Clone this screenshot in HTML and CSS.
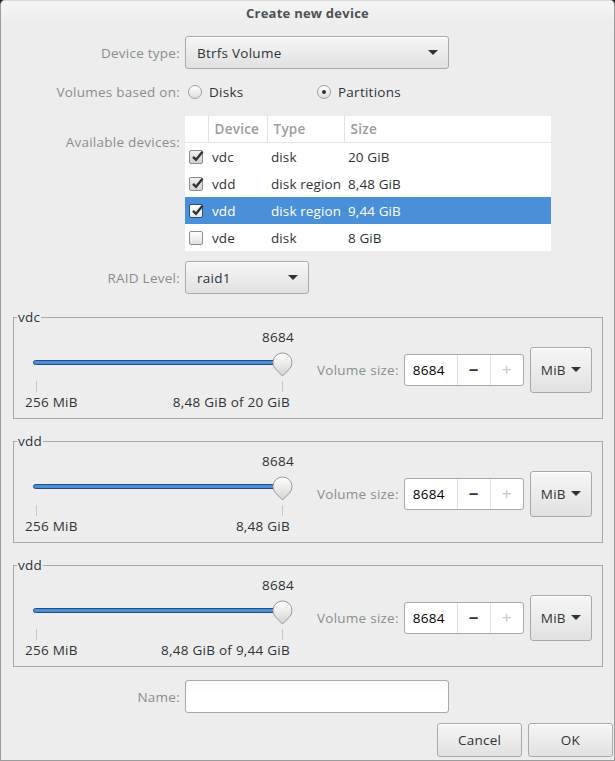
FILE: index.html
```html
<!DOCTYPE html>
<html lang="en">
<head>
<meta charset="utf-8">
<title>Create new device</title>
<link rel="stylesheet" href="styles.css">
</head>
<body>
<div class="window">
  <header class="titlebar">Create new device</header>
  <main class="content">
    <div class="row row-type">
      <span class="lbl">Device type:</span>
      <div class="combo combo-wide"><span>Btrfs Volume</span><span class="arrow"></span></div>
    </div>

    <div class="row row-radios">
      <span class="lbl">Volumes based on:</span>
      <div class="radios">
        <span class="radio-opt radio-first"><span class="radio"></span>Disks</span>
        <span class="radio-opt"><span class="radio radio-on"></span>Partitions</span>
      </div>
    </div>

    <div class="row row-table">
      <span class="lbl lbl-top">Available devices:</span>
      <table class="devices">
        <colgroup><col class="c-chk"><col class="c-dev"><col class="c-type"><col class="c-size"></colgroup>
        <thead>
          <tr><th></th><th>Device</th><th>Type</th><th>Size</th></tr>
        </thead>
        <tbody>
          <tr><td><span class="check on"><svg viewBox="0 0 14 14" width="14" height="14"><path d="M3 6.8 L6 9.8 L12.5 1.8" fill="none" stroke="#2e3436" stroke-width="2.4"/></svg></span></td><td>vdc</td><td>disk</td><td>20 GiB</td></tr>
          <tr><td><span class="check on"><svg viewBox="0 0 14 14" width="14" height="14"><path d="M3 6.8 L6 9.8 L12.5 1.8" fill="none" stroke="#2e3436" stroke-width="2.4"/></svg></span></td><td>vdd</td><td>disk region</td><td>8,48 GiB</td></tr>
          <tr class="sel"><td><span class="check on sel-check"><svg viewBox="0 0 14 14" width="14" height="14"><path d="M3 6.8 L6 9.8 L12.5 1.8" fill="none" stroke="#2e3436" stroke-width="2.4"/></svg></span></td><td>vdd</td><td>disk region</td><td>9,44 GiB</td></tr>
          <tr><td><span class="check"></span></td><td>vde</td><td>disk</td><td>8 GiB</td></tr>
        </tbody>
      </table>
    </div>

    <div class="row row-raid">
      <span class="lbl">RAID Level:</span>
      <div class="combo combo-raid"><span>raid1</span><span class="arrow"></span></div>
    </div>

    <fieldset class="frame frame-first">
      <legend>vdc</legend>
      <div class="frame-body">
        <div class="slider">
          <div class="slider-value">8684</div>
          <svg class="slider-track" width="270" height="46" viewBox="0 0 270 46">
            <defs>
              <linearGradient id="hg1" x1="0" y1="0" x2="0" y2="1"><stop offset="0" stop-color="#ffffff"/><stop offset="1" stop-color="#d4d4d4"/></linearGradient>
            </defs>
            <line x1="11.5" y1="34" x2="11.5" y2="45" stroke="#c8c8c8"/>
            <line x1="257.5" y1="34" x2="257.5" y2="45" stroke="#c8c8c8"/>
            <rect x="8.5" y="13.5" width="246" height="4" rx="2" fill="#4a90d9" stroke="#244e80"/>
            <path d="M257.5 29 L250.6 22 A9.5 9.5 0 1 1 264.4 22 Z" fill="url(#hg1)" stroke="#9a9a9a"/>
          </svg>
          <div class="slider-labels"><span>256 MiB</span><span>8,48 GiB of 20 GiB</span></div>
        </div>
        <span class="vol-label">Volume size:</span>
        <div class="spin"><span class="spin-entry">8684</span><span class="spin-btn">−</span><span class="spin-btn spin-off">+</span></div>
        <div class="unit-btn"><span>MiB</span><span class="arrow"></span></div>
      </div>
    </fieldset>

    <fieldset class="frame">
      <legend>vdd</legend>
      <div class="frame-body">
        <div class="slider">
          <div class="slider-value">8684</div>
          <svg class="slider-track" width="270" height="46" viewBox="0 0 270 46">
            <defs>
              <linearGradient id="hg2" x1="0" y1="0" x2="0" y2="1"><stop offset="0" stop-color="#ffffff"/><stop offset="1" stop-color="#d4d4d4"/></linearGradient>
            </defs>
            <line x1="11.5" y1="34" x2="11.5" y2="45" stroke="#c8c8c8"/>
            <line x1="257.5" y1="34" x2="257.5" y2="45" stroke="#c8c8c8"/>
            <rect x="8.5" y="13.5" width="246" height="4" rx="2" fill="#4a90d9" stroke="#244e80"/>
            <path d="M257.5 29 L250.6 22 A9.5 9.5 0 1 1 264.4 22 Z" fill="url(#hg2)" stroke="#9a9a9a"/>
          </svg>
          <div class="slider-labels"><span>256 MiB</span><span>8,48 GiB</span></div>
        </div>
        <span class="vol-label">Volume size:</span>
        <div class="spin"><span class="spin-entry">8684</span><span class="spin-btn">−</span><span class="spin-btn spin-off">+</span></div>
        <div class="unit-btn"><span>MiB</span><span class="arrow"></span></div>
      </div>
    </fieldset>

    <fieldset class="frame">
      <legend>vdd</legend>
      <div class="frame-body">
        <div class="slider">
          <div class="slider-value">8684</div>
          <svg class="slider-track" width="270" height="46" viewBox="0 0 270 46">
            <defs>
              <linearGradient id="hg3" x1="0" y1="0" x2="0" y2="1"><stop offset="0" stop-color="#ffffff"/><stop offset="1" stop-color="#d4d4d4"/></linearGradient>
            </defs>
            <line x1="11.5" y1="34" x2="11.5" y2="45" stroke="#c8c8c8"/>
            <line x1="257.5" y1="34" x2="257.5" y2="45" stroke="#c8c8c8"/>
            <rect x="8.5" y="13.5" width="246" height="4" rx="2" fill="#4a90d9" stroke="#244e80"/>
            <path d="M257.5 29 L250.6 22 A9.5 9.5 0 1 1 264.4 22 Z" fill="url(#hg3)" stroke="#9a9a9a"/>
          </svg>
          <div class="slider-labels"><span>256 MiB</span><span>8,48 GiB of 9,44 GiB</span></div>
        </div>
        <span class="vol-label">Volume size:</span>
        <div class="spin"><span class="spin-entry">8684</span><span class="spin-btn">−</span><span class="spin-btn spin-off">+</span></div>
        <div class="unit-btn"><span>MiB</span><span class="arrow"></span></div>
      </div>
    </fieldset>

    <div class="row row-name">
      <span class="lbl">Name:</span>
      <div class="entry"></div>
    </div>

    <div class="actions">
      <button class="btn" type="button">Cancel</button>
      <button class="btn" type="button">OK</button>
    </div>
  </main>
</div>
</body>
</html>
```
FILE: styles.css
```css
html, body {
  margin: 0;
  padding: 0;
  background: #23232b;
}

body {
  font-family: "Open Sans", "DejaVu Sans", sans-serif;
  font-size: 13.5px;
  letter-spacing: 0.25px;
  color: #2e3436;
}

.window {
  width: 615px;
  height: 761px;
  box-sizing: border-box;
  border: 1px solid #9c9c9c;
  border-top-color: #d8d8d8;
  border-radius: 5px 5px 0 0;
  background: #ededed;
  overflow: hidden;
  display: flex;
  flex-direction: column;
}

.titlebar {
  height: 24px;
  line-height: 24px;
  margin-bottom: 1px;
  text-align: center;
  font-weight: bold;
  font-size: 13px;
  color: #4c5256;
  background: linear-gradient(#f5f5f5, #ededed);
}

.content {
  display: flex;
  flex-direction: column;
}

.row {
  display: grid;
  grid-template-columns: 179px auto;
  column-gap: 5px;
  justify-content: start;
  align-items: center;
}

.lbl {
  text-align: right;
  color: #8a8d8e;
  white-space: nowrap;
}

.lbl-top {
  align-self: start;
  padding-top: 17px;
}

.row-type { margin-top: 10px; }
.row-radios { margin-top: 12px; height: 22px; }
.row-table { margin-top: 13px; }
.row-raid { margin-top: 10px; }
.row-name { margin-top: 13px; }

/* combo boxes */
.combo, .unit-btn, .btn {
  box-sizing: border-box;
  border: 1px solid #a9a9a9;
  border-radius: 3px;
  background: linear-gradient(#f6f6f6, #e1e1e1);
  box-shadow: inset 0 1px #fff;
}

.combo {
  height: 33px;
  display: flex;
  align-items: center;
  justify-content: space-between;
  padding: 0 10px 0 11px;
}

.combo-wide { width: 264px; }
.combo-raid { width: 124px; }

.arrow {
  width: 0;
  height: 0;
  border-left: 5px solid transparent;
  border-right: 5px solid transparent;
  border-top: 5px solid #2e3436;
}

/* radios */
.radios {
  display: flex;
  align-items: center;
}

.radio-opt {
  display: flex;
  align-items: center;
  gap: 7px;
}

.radio-first { width: 129px; margin-left: 3px; }

.radio {
  box-sizing: border-box;
  width: 14px;
  height: 14px;
  border: 1px solid #a0a0a0;
  border-radius: 50%;
  background: linear-gradient(#ffffff, #dedede);
  display: flex;
  align-items: center;
  justify-content: center;
}

.radio-on::after {
  content: "";
  width: 4px;
  height: 4px;
  border-radius: 50%;
  background: #2e3436;
}

/* table */
.devices {
  width: 366px;
  table-layout: fixed;
  border-collapse: collapse;
  background: #fff;
}

.c-chk { width: 23px; }
.c-dev { width: 59px; }
.c-type { width: 77px; }
.c-size { width: 207px; }

.devices th {
  height: 26px;
  padding: 0 0 0 6px;
  text-align: left;
  font-weight: 600;
  color: #9a9d9e;
  border-bottom: 1px solid #e6e6e6;
}

.devices th + th {
  border-left: 1px solid #e2e2e2;
}

.devices td {
  height: 27px;
  padding: 0 0 0 4px;
  white-space: nowrap;
  letter-spacing: 0.1px;
}

.devices td:first-child {
  padding-left: 4px;
}

.devices tr.sel td {
  background: #4a90d9;
  color: #fff;
}

.check {
  box-sizing: border-box;
  width: 14px;
  height: 14px;
  border: 1px solid #8e8e8e;
  border-radius: 2px;
  background: linear-gradient(#ffffff, #e2e2e2);
  display: block;
}

.check.on {
  background: linear-gradient(#f0f0f0, #d2d2d2);
}

.check.sel-check {
  background: linear-gradient(#ffffff, #e8e8e8);
  border-color: #2b4f7a;
}

.check svg {
  display: block;
  margin: -1px 0 0 0;
}

/* frames */
.frame {
  margin: 16px 11px 0 12px;
  padding: 5px 10px 8px 11px;
  border: 1px solid #a9a9a9;
  min-width: 0;
}

.frame + .frame { margin-top: 15px; }

.frame legend {
  margin-left: -8px;
  padding: 0 1px;
  line-height: 14px;
}

.frame-body {
  display: flex;
  align-items: center;
}

.slider {
  width: 270px;
  flex: none;
}

.slider-value {
  text-align: right;
  line-height: 16px;
  padding-right: 1px;
  margin-bottom: 2px;
}

.slider-track {
  display: block;
}

.slider-labels {
  display: flex;
  justify-content: space-between;
  line-height: 16px;
  margin-top: 1px;
  padding-right: 5px;
}

.vol-label {
  margin-left: 22px;
  color: #8a8d8e;
  white-space: nowrap;
}

.spin {
  margin-left: 5px;
  box-sizing: border-box;
  height: 32px;
  display: flex;
  border: 1px solid #a9a9a9;
  border-radius: 3px;
  background: #fff;
}

.spin-entry {
  width: 52px;
  padding-left: 8px;
  box-sizing: border-box;
  display: flex;
  align-items: center;
  color: #000;
}

.spin-btn {
  width: 32px;
  border-left: 1px solid #e0e0e0;
  display: flex;
  align-items: center;
  justify-content: center;
  font-size: 17px;
  font-weight: bold;
  color: #2e3436;
}

.spin-off {
  color: #c8c8c8;
  font-weight: normal;
}

.unit-btn {
  margin-left: 6px;
  width: 63px;
  height: 46px;
  display: flex;
  align-items: center;
  gap: 5px;
  padding-left: 10px;
}

/* name entry */
.entry {
  box-sizing: border-box;
  width: 264px;
  height: 33px;
  border: 1px solid #a9a9a9;
  border-radius: 3px;
  background: linear-gradient(#f9f9f9, #ffffff 40%);
}

/* buttons */
.actions {
  margin-top: 10px;
  margin-right: 1px;
  display: flex;
  justify-content: flex-end;
  gap: 6px;
}

.btn {
  width: 85px;
  height: 34px;
  font-family: inherit;
  font-size: 13.5px;
  letter-spacing: 0.25px;
  color: #2e3436;
  padding: 0;
}
```
